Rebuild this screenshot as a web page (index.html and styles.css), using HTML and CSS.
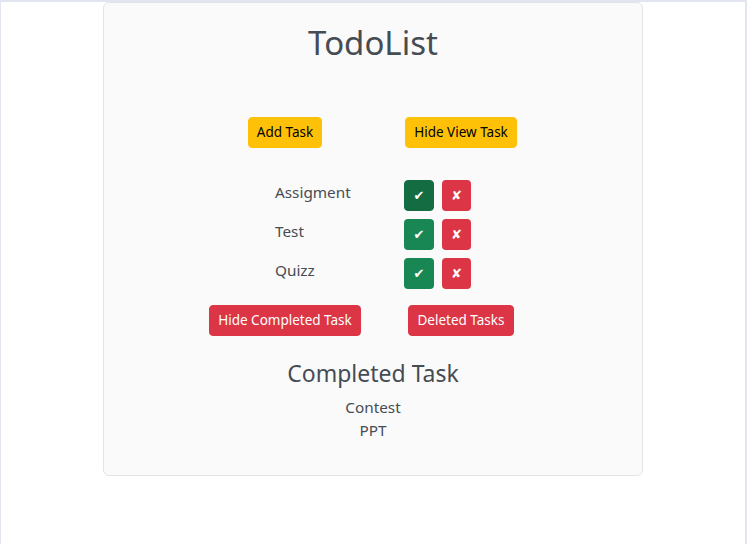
FILE: index.html
```html
<!DOCTYPE html>
<html lang="en">
<head>
<meta charset="utf-8">
<title>TodoList</title>
<link rel="stylesheet" href="styles.css">
</head>
<body>
<div class="frame">
  <div class="card">
    <h1 class="title">TodoList</h1>
    <div class="actions top-actions">
      <button class="btn btn-warning">Add Task</button>
      <button class="btn btn-warning">Hide View Task</button>
    </div>
    <div class="tasks">
      <div class="task-name">Assigment</div>
      <div class="task-btns">
        <button class="icon-btn btn-success active">✔</button>
        <button class="icon-btn btn-danger">✘</button>
      </div>
      <div class="task-name">Test</div>
      <div class="task-btns">
        <button class="icon-btn btn-success">✔</button>
        <button class="icon-btn btn-danger">✘</button>
      </div>
      <div class="task-name">Quizz</div>
      <div class="task-btns">
        <button class="icon-btn btn-success">✔</button>
        <button class="icon-btn btn-danger">✘</button>
      </div>
    </div>
    <div class="actions bottom-actions">
      <button class="btn btn-danger">Hide Completed Task</button>
      <button class="btn btn-danger">Deleted Tasks</button>
    </div>
    <h3 class="completed-title">Completed Task</h3>
    <ul class="completed-list">
      <li>Contest</li>
      <li>PPT</li>
    </ul>
  </div>
</div>
</body>
</html>
```
FILE: styles.css
```css
* { box-sizing: border-box; }
html, body { margin: 0; padding: 0; background: #fff; }
body {
  font-family: "Noto Sans", "Open Sans", sans-serif;
  color: #464c53;
  font-size: 15.3px;
  line-height: 1.5;
}
.frame {
  min-height: 544px;
  border-top: 2px solid #e2e4f0;
  border-left: 1px solid #e2e4f0;
  border-right: 2px solid #e2e4f0;
}
.card {
  width: 540px;
  margin: 0 auto;
  background: #fafafa;
  border: 1px solid #e4e4e4;
  border-radius: 6px;
  text-align: center;
  padding: 20px 0 33px;
}
.title {
  margin: 0;
  font-size: 33px;
  font-weight: 400;
  line-height: 1.2;
}
.actions {
  display: grid;
  grid-template-columns: 176px 176px;
  justify-content: center;
  justify-items: center;
}
.top-actions { margin-top: 54px; }
.bottom-actions { margin-top: 16px; }
.btn {
  font-family: inherit;
  font-size: 13.5px;
  line-height: 21px;
  padding: 4px 8px;
  border: 1px solid transparent;
  border-radius: 4px;
  cursor: pointer;
}
.btn-warning { background: #ffc107; border-color: #ffc107; color: #000; }
.btn-danger { background: #dc3545; border-color: #dc3545; color: #fff; }
.btn-success { background: #198754; border-color: #198754; color: #fff; }
.btn-success.active { background: #146c43; border-color: #146c43; }
.tasks {
  display: grid;
  grid-template-columns: 129px 67px;
  justify-content: center;
  row-gap: 8px;
  margin-top: 32px;
  text-align: left;
}
.task-name { line-height: 24px; }
.task-btns { display: flex; gap: 8px; }
.icon-btn {
  width: 30px;
  height: 31px;
  padding: 0;
  font-size: 13px;
  line-height: 1;
  border: 1px solid transparent;
  border-radius: 4px;
  font-family: "DejaVu Sans", sans-serif;
}
.icon-btn.btn-danger { width: 29px; }
.completed-title {
  margin: 24px 0 9px;
  font-size: 23px;
  font-weight: 400;
  line-height: 1.2;
}
.completed-list {
  list-style: none;
  margin: 0;
  padding: 0;
}
```
